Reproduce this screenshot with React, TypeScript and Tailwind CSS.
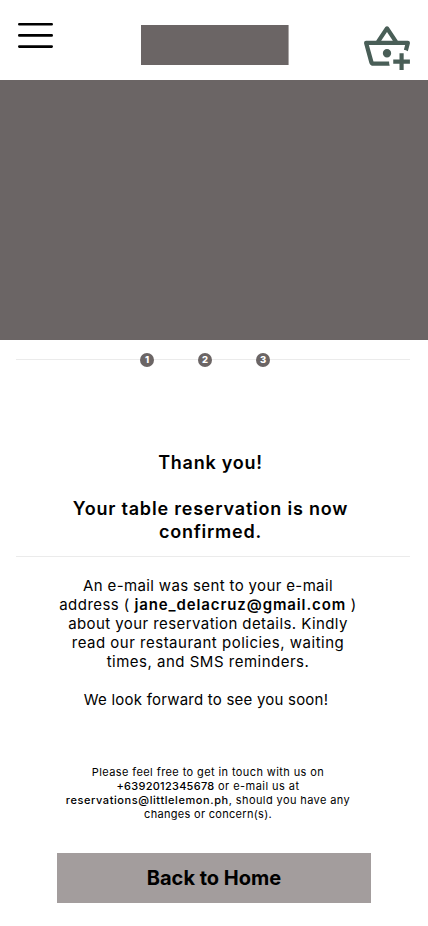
const ink = "#6b6565";

function MenuIcon() {
  return (
    <svg width="35" height="26" viewBox="0 0 35 26" stroke="#000" strokeWidth="2.6" strokeLinecap="round">
      <path d="M1.3 1.3h32.4M1.3 12.4h32.4M1.3 23.6h32.4" />
    </svg>
  );
}

function BasketPlusIcon() {
  return (
    <svg width="50" height="50" viewBox="0 0 24 24" fill="#495e57">
      <path d="M22 9h-4.8l-4.4-6.6c-.2-.3-.5-.4-.8-.4s-.6.1-.8.4L6.8 9H2c-.6 0-1 .4-1 1v.3l2.5 9.2c.2.9 1 1.5 1.9 1.5h7.9c-.2-.6-.3-1.300-.3-2H5.500L3.300 11h17.400l-.6 2.300c.7.100 1.300.300 1.900.700L23 10.300V10c0-.6-.4-1-1-1M12 4.800L14.800 9H9.200L12 4.800M14 15a2 2 0 1 1-4 0 2 2 0 0 1 4 0M18 15v3h-3v2h3v3h2v-3h3v-2h-3v-3h-2z" />
    </svg>
  );
}

function Step({ n }: { n: number }) {
  return (
    <span className="flex size-[14px] items-center justify-center rounded-full bg-[#6b6565] pb-px font-['Inter',sans-serif] text-[9.500px] leading-none font-extrabold text-white">
      {n}
    </span>
  );
}

export default function App() {
  return (
    <main className="flex h-[926px] w-[428px] flex-col overflow-hidden bg-white font-['Inter',sans-serif] text-black">
      <header className="flex h-20 shrink-0 items-start justify-between pl-[18px] pr-4">
        <button aria-label="Menu" className="mt-[23px] w-[50px]"><MenuIcon /></button>
        <div className="mt-[25px] h-10 w-[148px] border-r border-[#aaa6a6] bg-[#6b6565]" />
        <button aria-label="Basket" className="mt-[22px]"><BasketPlusIcon /></button>
      </header>
      <section className="h-[260px] shrink-0" style={{ backgroundColor: ink }} />
      <nav className="mx-4 mt-[13px] flex h-[14px] w-[394px] shrink-0 items-center bg-[linear-gradient(#ebebeb,#ebebeb)] bg-[length:100%_1px] bg-[position:0_6px] bg-no-repeat pl-[124px]">
        <div className="flex gap-[44px]"><Step n={1} /><Step n={2} /><Step n={3} /></div>
      </nav>
      <h1 className="mt-[84px] flex w-[421px] flex-col items-center whitespace-nowrap text-[18px] leading-[23px] font-semibold">
        <span className="tracking-[0.75px]">Thank you!</span>
        <span className="mt-[23px] tracking-[0.8px]">Your table reservation is now</span>
        <span className="tracking-[0.75px]">confirmed.</span>
      </h1>
      <hr className="mx-4 mt-[12.500px] h-px w-[394px] shrink-0 border-0 bg-[#ebebeb]" />
      <div className="mt-[19px] flex w-[416px] flex-col items-center whitespace-nowrap text-[15px] leading-[19px]">
        <span className="tracking-[0.36px]">An e-mail was sent to your e-mail</span>
        <span className="tracking-[0.45px]">address ( <b className="font-semibold tracking-[0.89px]">jane_delacruz@gmail.com</b> )</span>
        <span className="tracking-[0.42px]">about your reservation details. Kindly</span>
        <span className="tracking-[0.5px]">read our restaurant policies, waiting</span>
        <span className="tracking-[0.5px]">times, and SMS reminders.</span>
        <span className="mt-[19px] ml-[-4px] tracking-[0.22px]">We look forward to see you soon!</span>
      </div>
      <div className="mt-[56px] flex w-[416px] flex-col items-center whitespace-nowrap text-[11px] leading-[14px]">
        <span className="tracking-[0.4px]">Please feel free to get in touch with us on</span>
        <span className="tracking-[0.45px]"><b className="font-medium tracking-[0.27px]">+6392012345678</b> or e-mail us at</span>
        <span className="tracking-[0.4px]"><b className="font-medium tracking-[0.58px]">reservations@littlelemon.ph</b>, should you have any</span>
        <span className="tracking-[0.3px]">changes or concern(s).</span>
      </div>
      <button className="mt-[32px] ml-[57px] h-[50px] w-[314px] shrink-0 bg-[#a39d9d] font-['Inter',sans-serif] text-[20px] font-bold tracking-normal">
        Back to Home
      </button>
    </main>
  );
}
